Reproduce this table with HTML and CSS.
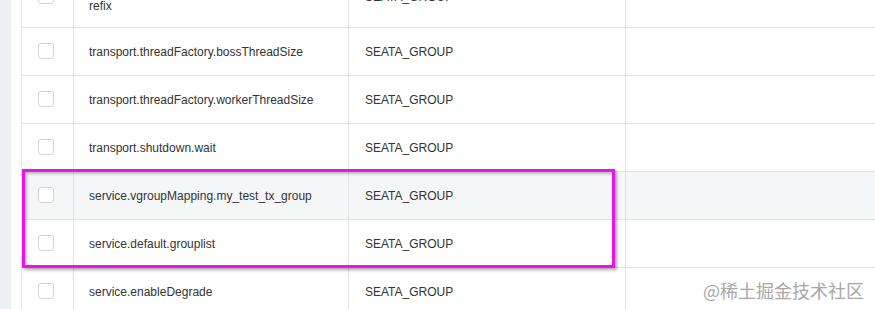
FILE: index.html
```html
<!DOCTYPE html>
<html lang="zh">
<head>
<meta charset="utf-8">
<title>Config list</title>
<link rel="stylesheet" href="styles.css">
</head>
<body>
<div class="page">
  <aside class="sidebar"></aside>
  <main class="main">
    <div class="table">
      <div class="row">
        <div class="cell check"><span class="checkbox"></span></div>
        <div class="cell key"><span>transport.threadFactory.clientSelectorThreadP<br>refix</span></div>
        <div class="cell group"><span>SEATA_GROUP</span></div>
        <div class="cell rest"></div>
      </div>
      <div class="row">
        <div class="cell check"><span class="checkbox"></span></div>
        <div class="cell key"><span>transport.threadFactory.bossThreadSize</span></div>
        <div class="cell group"><span>SEATA_GROUP</span></div>
        <div class="cell rest"></div>
      </div>
      <div class="row">
        <div class="cell check"><span class="checkbox"></span></div>
        <div class="cell key"><span>transport.threadFactory.workerThreadSize</span></div>
        <div class="cell group"><span>SEATA_GROUP</span></div>
        <div class="cell rest"></div>
      </div>
      <div class="row">
        <div class="cell check"><span class="checkbox"></span></div>
        <div class="cell key"><span>transport.shutdown.wait</span></div>
        <div class="cell group"><span>SEATA_GROUP</span></div>
        <div class="cell rest"></div>
      </div>
      <div class="row hover">
        <div class="cell check"><span class="checkbox"></span></div>
        <div class="cell key"><span>service.vgroupMapping.my_test_tx_group</span></div>
        <div class="cell group"><span>SEATA_GROUP</span></div>
        <div class="cell rest"></div>
      </div>
      <div class="row">
        <div class="cell check"><span class="checkbox"></span></div>
        <div class="cell key"><span>service.default.grouplist</span></div>
        <div class="cell group"><span>SEATA_GROUP</span></div>
        <div class="cell rest"></div>
      </div>
      <div class="row">
        <div class="cell check"><span class="checkbox"></span></div>
        <div class="cell key"><span>service.enableDegrade</span></div>
        <div class="cell group"><span>SEATA_GROUP</span></div>
        <div class="cell rest"></div>
      </div>
    </div>
  </main>
</div>
<div class="highlight"></div>
<div class="watermark">@稀土掘金技术社区</div>
</body>
</html>
```
FILE: styles.css
```css
html, body {
  margin: 0;
  padding: 0;
  height: 309px;
  overflow: hidden;
  background: #fff;
}
body {
  position: relative;
  font-family: "Liberation Sans", Arial, "Noto Sans CJK SC", sans-serif;
  font-size: 12px;
  color: #333;
}
.page {
  display: flex;
  height: 309px;
}
.sidebar {
  flex: none;
  width: 11px;
  background: #eef0f3;
}
.main {
  flex: 1;
  padding-left: 10px;
  min-width: 0;
}
.table {
  margin-top: -33px;
  border-left: 1px solid #e3e3e3;
}
.row {
  display: grid;
  grid-template-columns: 52px 275px 277px 1fr;
  border-bottom: 1px solid #e3e3e3;
  min-height: 47px;
}
.row.hover {
  background: #f5f6f8;
}
.cell {
  display: flex;
  align-items: center;
  padding: 12px 15px;
  line-height: 18px;
  border-right: 1px solid #e3e3e3;
}
.cell.group {
  padding-left: 16px;
}
.cell.check {
  padding: 0 0 0 16px;
}
.cell.rest {
  border-right: none;
}
.checkbox {
  display: block;
  width: 14px;
  height: 14px;
  border: 1px solid #d4d4d4;
  border-radius: 3px;
  background: #fff;
  margin-top: -2px;
}
.highlight {
  position: absolute;
  left: 22px;
  top: 169px;
  width: 587px;
  height: 93px;
  border: 3px solid #ea14ea;
  box-shadow: 2px 2px 3px rgba(0, 0, 0, 0.35), inset 2px 2px 3px rgba(0, 0, 0, 0.25);
}
.watermark {
  position: absolute;
  left: 703px;
  top: 280px;
  font-family: "Noto Sans CJK SC", sans-serif;
  font-size: 18px;
  line-height: 20px;
  color: #a8a8a8;
  text-shadow: 0 0 1px #fff;
}
```
